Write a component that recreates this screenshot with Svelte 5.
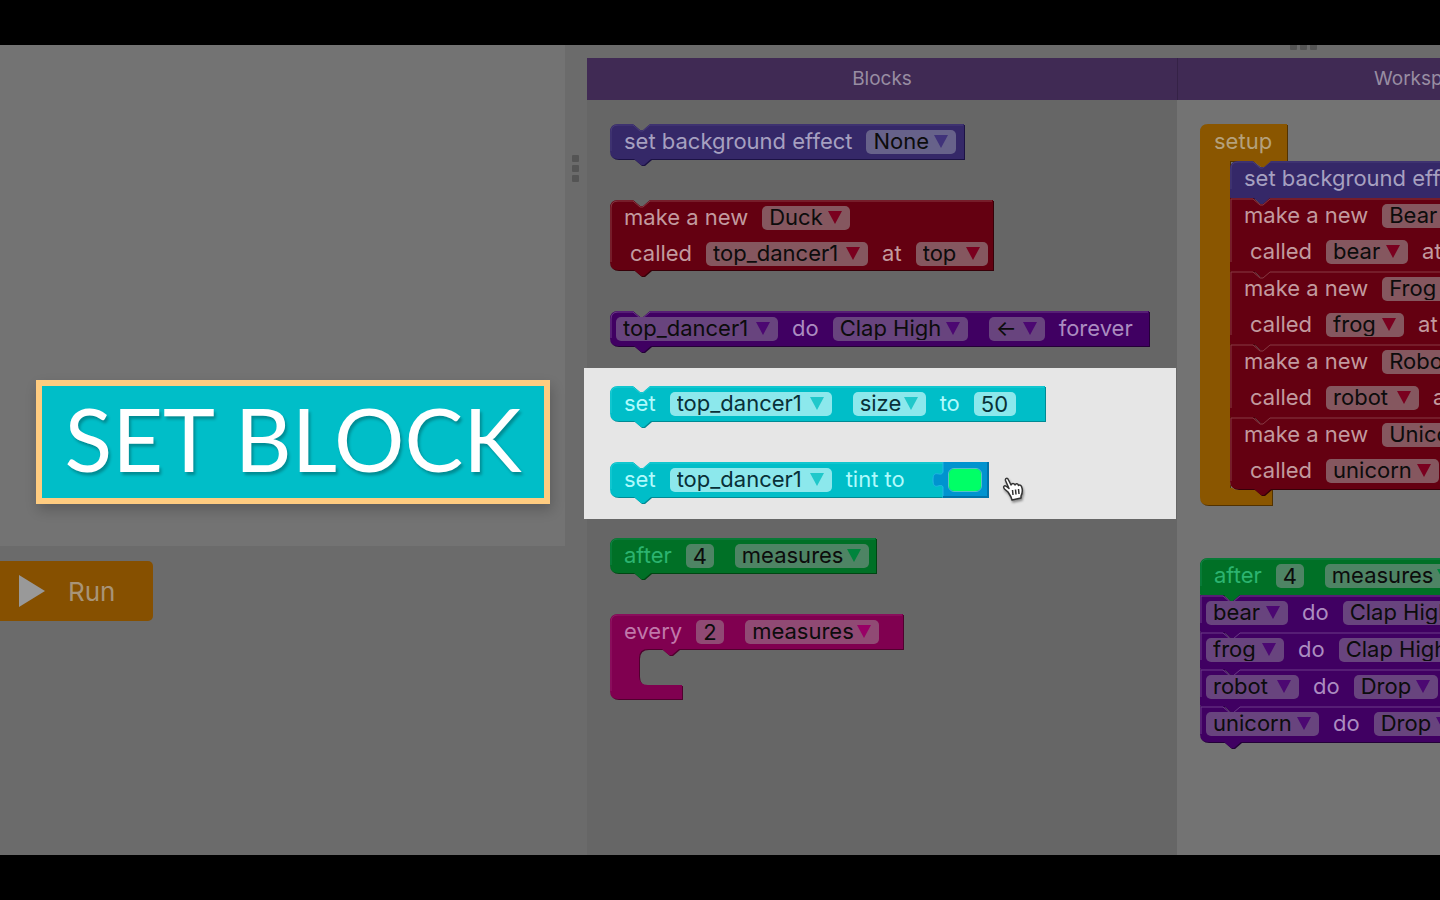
<script>
  const d = (v, w) => ({ kind: 'select', v, w });
  const n = (v, w) => ({ kind: 'input', v, w });
  const t = (v) => ({ kind: 'text', v });

  const palette = [
    { tone: 'indigo', w: 354, rows: [[t('set background effect'), d('None', 90)]] },
    {
      tone: 'red',
      w: 383,
      rows: [
        [t('make a new'), d('Duck', 88)],
        [t('called'), d('top_dancer1', 162), t('at'), d('top', 72)]
      ]
    },
    {
      tone: 'purple',
      w: 539,
      rows: [[d('top_dancer1', 162), t('do'), d('Clap High', 135), d('←', 56), t('forever')]]
    }
  ];
  const featured = [
    { tone: 'teal', w: 435, rows: [[t('set'), d('top_dancer1', 162), d('size', 73), t('to'), n('50', 42)]] },
    { tone: 'teal', w: 378, rows: [[t('set'), d('top_dancer1', 162), t('tint to'), { kind: 'color', v: '#00ff66' }]] }
  ];
  const timing = [
    { tone: 'green', w: 266, flat: true, rows: [[t('after'), n('4', 28), d('measures', 134)]] },
    { tone: 'pink', w: 293, loop: true, rows: [[t('every'), n('2', 28), d('measures', 134)]] }
  ];
  const make = (kind, name, w) => ({
    tone: 'red',
    w: 383,
    rows: [
      [t('make a new'), d(kind, 100)],
      [t('called'), d(name, w), t('at'), d('top', 72)]
    ]
  });
  const setup = [
    { tone: 'indigo', w: 354, rows: [[t('set background effect'), d('None', 90)]] },
    make('Bear', 'bear', 82),
    make('Frog', 'frog', 78),
    make('Robot', 'robot', 93),
    make('Unicorn', 'unicorn', 113)
  ];
  const act = (name, w, move, mw) => ({ tone: 'purple', w: 480, rows: [[d(name, w), t('do'), d(move, mw)]] });
  const after = [
    { tone: 'green', w: 266, flat: true, rows: [[t('after'), n('4', 28), d('measures', 134)]] },
    act('bear', 82, 'Clap High', 135),
    act('frog', 78, 'Clap High', 135),
    act('robot', 93, 'Drop', 84),
    act('unicorn', 113, 'Drop', 84)
  ];

  const top = (w, flat, r) => `M0 ${r} Q0 0 ${r} 0 ${flat ? '' : 'H23 L30 6 H33 L40 0 '}H${w}`;
  function outline(b, h, r, foot) {
    if (b.loop) {
      return `${top(b.w, true, r)} V35 H69 L62 41 H59 L52 35 H38 Q29 35 29 44 V62 Q29 71 38 71 H72 V85 H8 Q0 85 0 77 Z`;
    }
    return `${top(b.w, b.flat, r)} V${h} H41 L34 ${h + 6} H31 L24 ${h} H${foot} Q0 ${h} 0 ${h - foot} Z`;
  }
  const edge = (b, h, r) =>
    `M1 ${h - 9} V${r} Q1 1 ${r} 1 ${b.flat || b.loop ? '' : 'H23 L30 7 H33 L40 1 '}H${b.w - 1}`;
</script>

{#snippet block(b, stacked, first, last)}
  {@const h = b.loop ? 86 : b.rows.length * 36 - (b.rows.length - 1) + (stacked ? b.rows.length : 0)}
  {@const r = stacked && !first ? 1 : 8}
  {@const foot = stacked && !last ? 1 : 8}
  {@const bottom = stacked && !last ? h : h - 1}
  <div class="block {b.tone}" style="width:{b.w}px;height:{h}px">
    <svg class="shape" width={b.w + 2} height={h + 8} aria-hidden="true">
      <path class="shade" d={outline(b, bottom, r, foot)} transform="translate(1 1)" />
      <path class="body" d={outline(b, bottom, r, foot)} />
      <path class="edge" d={edge(b, h, r)} />
    </svg>
    {#each b.rows as row, i}
      <div class="row" class:second={i > 0} class:tight={row[0].kind === 'select'}>
        {#each row as p}
          {#if p.kind === 'text'}
            <span>{p.v}</span>
          {:else if p.kind === 'select'}
            <label class="pick" style="width:{p.w}px">
              <select aria-label={p.v}><option>{p.v}</option></select>
              <svg viewBox="0 0 14 13" width="14" height="13" aria-hidden="true"><path d="M0 0H14L7 13Z" /></svg>
            </label>
          {:else if p.kind === 'input'}
            <input class="num" aria-label="number" value={p.v} style="width:{p.w}px" />
          {:else}
            <div class="socket">
              <svg viewBox="0 0 60 36" width="60" height="36" aria-hidden="true">
                <path class="plug" d="M14 0H60V36H14V25C12 20 4 30 4 18C4 6 12 16 14 10Z" />
                <path class="seam" d="M14 0V10C12 16 4 6 4 18C4 30 12 20 14 25V36" />
                <path class="rim" d="M59 0V35H14" />
              </svg>
              <input type="color" aria-label="tint" value={p.v} />
            </div>
          {/if}
        {/each}
      </div>
    {/each}
  </div>
{/snippet}

<div class="screen">
  <main>
    <section class="left">
      <div class="preview">
        <h1>SET BLOCK</h1>
      </div>
      <button class="run">
        <svg viewBox="0 0 26 32" width="26" height="32" aria-hidden="true"><path d="M0 0L26 16L0 32Z" /></svg>
        Run
      </button>
      <div class="grip side"><i></i><i></i><i></i></div>
    </section>

    <section class="toolbox">
      <h2>Blocks</h2>
      <div class="list">
        {#each palette as b}{@render block(b, false)}{/each}
      </div>
      <div class="list spotlight">
        {#each featured as b}{@render block(b, false)}{/each}
        <svg class="hand" viewBox="0 0 20 24" width="20" height="24" aria-hidden="true">
          <path d="M5 15L1.500 12C-.5 9.500 1.500 8 3.500 9.500L6 11.500L2.500 3.500C2 1 4.500 .5 5.500 3L8 8C9 6 11 6 12 8C13 6 15 6.500 15.500 8.500C17 7.500 18.500 8.500 19 11C20 15 19 17 18 19L18 21L9 23L8 20Z" />
          <path d="M9.500 13L10 18M12.500 12.500L13 17.500M15.500 12L16 17" />
        </svg>
      </div>
      <div class="list last">
        {#each timing as b}{@render block(b, false)}{/each}
      </div>
    </section>

    <section class="workspace">
      <div class="grip"><i></i><i></i><i></i></div>
      <h2>Workspace</h2>
      <div class="canvas">
        <div class="event">
          <svg class="shape" width="90" height="384" aria-hidden="true">
            <path class="event-shade" d="M0 8Q0 0 8 0H87V37H30V364H72V381H8Q0 381 0 373Z" transform="translate(1 1)" />
            <path class="event-body" d="M0 8Q0 0 8 0H87V37H30V364H72V381H8Q0 381 0 373Z" />
            <path class="glint" d="M31 357Q31 365 39 365H72" />
          </svg>
          <span class="name">setup</span>
          <div class="stack">
            {#each setup as b, i}{@render block(b, true, i === 0, i === setup.length - 1)}{/each}
          </div>
          <svg class="tab" viewBox="0 0 18 6" width="18" height="6" aria-hidden="true"><path d="M0 0H18L11 6H8Z" /></svg>
        </div>
        <div class="stack">
          {#each after as b, i}{@render block(b, true, i === 0, i === after.length - 1)}{/each}
        </div>
      </div>
    </section>
  </main>
</div>

<style>
  :global(body) { margin: 0; background: #000; }
  .screen {
    box-sizing: border-box;
    min-height: 100vh;
    padding: 45px 0;
    display: flex;
    background: #000;
    font-family: Inter, "Liberation Sans", sans-serif;
    font-size: 22px;
    overflow: hidden;
  }
  main { flex: 1; min-width: 0; display: flex; background: #6b6b6b; }
  h1, h2 { margin: 0; font-weight: 400; }
  .left { flex: 0 0 587px; position: relative; }
  .preview {
    box-sizing: border-box;
    height: 501px;
    margin-right: 22px;
    padding: 0 15px 42px 36px;
    display: flex;
    align-items: flex-end;
    background: #737373;
  }
  h1 {
    flex: 1;
    box-sizing: border-box;
    height: 124px;
    border: 6px solid #ffcc80;
    background: #00bec8;
    color: #fff;
    font: 400 88px/104px Lato, sans-serif;
    text-align: center;
    white-space: nowrap;
    text-shadow: 2px 3px 3px #0004;
    box-shadow: 2px 6px 12px #0003;
  }
  .run {
    margin-top: 15px;
    width: 153px;
    height: 60px;
    padding: 0 0 0 19px;
    display: flex;
    align-items: center;
    gap: 23px;
    border: 0;
    border-radius: 0 5px 5px 0;
    background: #865000;
    color: #a89478;
    font: 400 26px Inter, sans-serif;
  }
  .run path { fill: #999; }
  .grip { display: flex; gap: 3px; }
  .grip i { width: 7px; height: 7px; background: #545454; border-radius: 1px; }
  .side { position: absolute; right: 8px; top: 110px; flex-direction: column; }

  .toolbox {
    flex: 0 0 590px;
    background: linear-gradient(#6b6b6b 13px, #666 13px);
    padding-top: 13px;
    box-sizing: border-box;
  }
  h2 {
    height: 42px;
    background: #402a54;
    color: #988da2;
    font-size: 19px;
    line-height: 41px;
    text-align: center;
  }
  .list { display: flex; flex-direction: column; gap: 40px; padding: 24px 0 21px 23px; }
  .spotlight {
    position: relative;
    margin: 0 1px 0 -3px;
    padding: 18px 0 21px 26px;
    background: #e6e6e6;
  }
  .last { padding-top: 19px; }
  .hand { position: absolute; left: 419px; top: 109px; overflow: visible; filter: drop-shadow(1px 2px 1px #0006); }
  .hand path { fill: #fff; stroke: #333; stroke-width: 1.500; stroke-linejoin: round; }

  .workspace {
    flex: 1;
    min-width: 0;
    box-sizing: border-box;
    position: relative;
    overflow: hidden;
    padding-top: 13px;
    background: linear-gradient(#6b6b6b 13px, #737373 13px);
  }
  .workspace h2 { padding-left: 196px; border-left: 1px solid #352246; text-align: left; }
  .workspace .grip { position: absolute; left: 113px; top: -2px; }
  .canvas { display: flex; flex-direction: column; gap: 52px; padding: 24px 0 0 23px; }
  .event { position: relative; height: 382px; }
  .event-body, .tab path { fill: #8a5600; }
  .event-shade { fill: #523200; }
  .glint { fill: none; stroke: #a8987e; stroke-width: 2; }
  .tab { position: absolute; left: 53px; top: 37px; }
  .name { position: relative; display: block; height: 37px; padding-left: 14px; line-height: 35px; color: #b5a17c; }
  .event .stack { padding-left: 30px; }

  .shape { position: absolute; left: 0; top: 0; overflow: visible; }
  .block { position: relative; color: var(--ink); }
  .body { fill: var(--c); }
  .shade { fill: var(--dark); }
  .edge { fill: none; stroke: var(--lit); stroke-width: 1; }
  .row { position: relative; box-sizing: border-box; height: 36px; display: flex; align-items: center; gap: 14px; padding-left: 14px; white-space: nowrap; }
  .row span { padding-bottom: 2px; }
  .row.second { padding-left: 20px; }
  .row.tight { padding-left: 6px; }
  .pick { position: relative; flex: none; height: 24px; }
  .pick + .pick, .num + .pick { margin-left: 7px; }
  .pick select, .num {
    box-sizing: border-box;
    width: 100%;
    height: 24px;
    margin: 0;
    padding: 0 0 1px 7px;
    display: block;
    appearance: none;
    border: 0;
    border-radius: 5px;
    background: var(--field);
    color: var(--text, #0c0c0c);
    font: inherit;
    line-height: 23px;
  }
  .pick svg { position: absolute; right: 8px; top: 5px; fill: var(--arrow, var(--c)); pointer-events: none; }
  .socket { position: relative; margin-left: 10px; height: 36px; width: 60px; }
  .plug { fill: #0093cf; }
  .seam { fill: none; stroke: #22b8e4; stroke-width: 1; }
  .rim { fill: none; stroke: #0072a8; stroke-width: 2; }
  .socket input {
    position: absolute;
    left: 19px;
    top: 6px;
    width: 34px;
    height: 24px;
    padding: 0;
    appearance: none;
    border: 1px solid #57c0c8;
    border-radius: 6px;
    background: #00ff66;
    overflow: hidden;
  }
  .socket input::-webkit-color-swatch-wrapper { padding: 0; }
  .socket input::-webkit-color-swatch { border: 0; }

  .indigo { --c: #352868; --dark: #1c1244; --lit: #493d78; --field: #67628a; --ink: #a6a0c0; --arrow: #40327a; }
  .red { --c: #640011; --dark: #360008; --lit: #873a44; --field: #85575f; --ink: #c29a9f; --arrow: #7a001f; }
  .purple { --c: #400062; --dark: #240038; --lit: #6c3c88; --field: #68447e; --ink: #ab8cc0; --arrow: #4c0872; }
  .teal { --c: #00bec8; --dark: #008a94; --lit: #20ced6; --field: #8ce8ec; --ink: #b0fafc; --text: #083038; --arrow: #20c8ca; }
  .green { --c: #007026; --dark: #004612; --lit: #108448; --field: #4e8464; --ink: #2cb470; --arrow: #00843c; }
  .pink { --c: #800050; --dark: #50002e; --lit: #921c68; --field: #904a74; --ink: #c078aa; --arrow: #980066; }
</style>
